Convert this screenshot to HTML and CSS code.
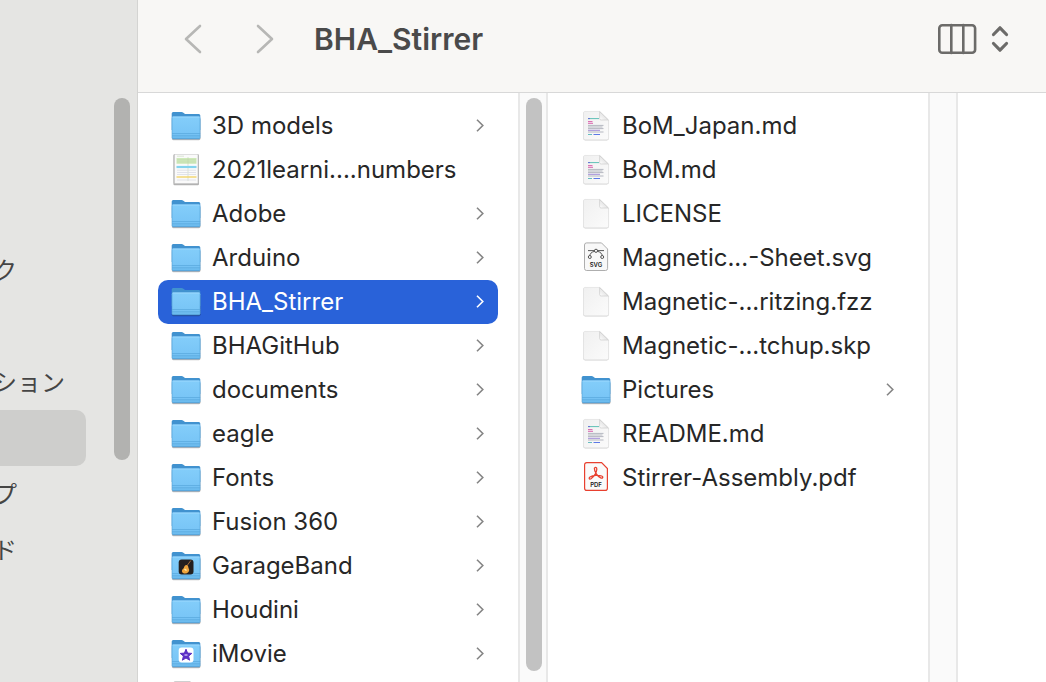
FILE: index.html
```html
<!DOCTYPE html>
<html lang="ja">
<head>
<meta charset="utf-8">
<meta name="viewport" content="width=device-width, initial-scale=1">
<title>BHA_Stirrer</title>
<link rel="stylesheet" href="styles.css">
</head>
<body>
<svg class="defs" aria-hidden="true">
  <defs>
    <linearGradient id="front" x1="0" y1="0" x2="0" y2="1"><stop offset="0" stop-color="#83cdfa"/><stop offset=".8" stop-color="#78c5f6"/><stop offset="1" stop-color="#66b7ec"/></linearGradient>
    <linearGradient id="paper" x1="0" y1="0" x2="1" y2="1"><stop offset="0" stop-color="#f0f0f0"/><stop offset="1" stop-color="#fbfbfb"/></linearGradient>
    <linearGradient id="fold" x1="0" y1="1" x2="1" y2="0"><stop offset="0" stop-color="#fff"/><stop offset=".5" stop-color="#e6e6e6"/><stop offset="1" stop-color="#f6f6f6"/></linearGradient>
  </defs>
  <symbol id="folder" viewBox="0 0 32 32">
    <rect x="1.6" y="8" width="29" height="22.4" rx="1.8" fill="#000" opacity=".12"/>
    <rect x="2" y="8" width="28.4" height="21.8" rx="1.5" fill="#000" opacity=".25"/>
    <path d="M1.7 3.5Q1.7 2 3.2 2H11.5Q12.6 2 13.4 2.8L14.3 3.5Q15 4 16 4H28.8Q30.3 4 30.3 5.5V20H1.7Z" fill="#4192cf"/>
    <path d="M1.9 8.2Q1.9 6.6 3.4 6.6H28.6Q30.2 6.6 30.2 8.2V27.5Q30.2 29 28.7 29H3.4Q1.9 29 1.9 27.5Z" fill="url(#front)"/>
    <path d="M2.5 7H29.7" stroke="#a2dcff" stroke-width=".8"/>
    <path d="M2.2 7.5V28M29.9 7.5V28" stroke="#5aaade" stroke-width=".6"/>
    <path d="M2 23.6H30.2M2 25.8H30.2" stroke="#58a7dc" stroke-width=".8"/>
    <path d="M2.4 28.8H29.8" stroke="#4d94c8" stroke-width=".7"/>
  </symbol>
  <symbol id="file" viewBox="0 0 32 32">
    <path d="M3.2 3.2Q3.2 1.6 5 1.6H20L28.9 10.4V28.6Q28.9 30.4 27 30.4H5Q3.2 30.4 3.2 28.6Z" fill="#000" opacity=".18"/>
    <path d="M3.5 3Q3.5 1.4 5.1 1.4H19.8L28.6 10V28Q28.6 29.7 26.9 29.7H5.1Q3.5 29.7 3.5 28Z" fill="url(#paper)" stroke="#e0e0e0" stroke-width=".5"/>
    <path d="M19.6 1.6V8.5Q19.6 10 21.1 10H28.4Z" fill="url(#fold)" stroke="#c6c6c6" stroke-width=".6"/>
  </symbol>
  <symbol id="markdown" viewBox="0 0 32 32">
    <use href="#file" width="32" height="32"/>
    <g fill="none" stroke-width="1">
      <path d="M8 8.6H19" stroke="#61c1b7"/><path d="M8 8.6H10" stroke="#6573d6"/>
      <path d="M8 11.6H12.5M8 13.3H13" stroke="#d964ae"/>
      <path d="M8 15.4H23.5M8 17H22.5M8 18.6H23.5M8 22H23.5" stroke="#b5b8c1"/>
      <path d="M8 20.3H20" stroke="#a08bd8"/>
      <path d="M8 24.5H12" stroke="#66bcc0"/><path d="M13.5 24.5H20" stroke="#5d79e6"/>
    </g>
  </symbol>
  <symbol id="sheet" viewBox="0 0 32 32">
    <rect x="3.4" y=".6" width="25.6" height="30.6" rx="1.2" fill="#000" opacity=".3"/>
    <rect x="4.2" y="0" width="24" height="29.8" rx=".8" fill="#fafafa" stroke="#b4b4b4" stroke-width=".8"/>
    <path d="M6.5 4H26.5V9.8H6.5Z" fill="#cfeab9"/>
    <path d="M7 2.2H14M7 5.8H26M7 8H26M18 3V27" stroke="#b8cfa8" stroke-width=".5"/>
    <path d="M6.5 13H26.5" stroke="#83d3ed" stroke-width="2.2"/>
    <path d="M7 16.2H26M7 18.5H26M7 20.5H26M7 26H26" stroke="#dadde4" stroke-width=".8"/>
    <path d="M6.5 23H26.5" stroke="#f3d569" stroke-width="1.4"/>
  </symbol>
  <symbol id="garage" viewBox="0 0 32 32">
    <use href="#folder" width="32" height="32"/>
    <rect x="8.7" y="9.5" width="14.8" height="15" rx="3" fill="#242020"/>
    <path d="M20.8 10.5L16.8 16" stroke="#a56d3b" stroke-width="1"/>
    <path d="M16.5 15Q18.5 15.5 18.5 18Q20 20 18.5 22Q16 24.5 13 23Q11 21.5 12.6 19.3Q14 18.5 14.2 16.8Q15 14.8 16.5 15Z" fill="#f0a53c"/>
    <path d="M14.5 19L16.5 20.5" stroke="#fff0b0" stroke-width="1.4"/>
  </symbol>
  <symbol id="imovie" viewBox="0 0 32 32">
    <use href="#folder" width="32" height="32"/>
    <rect x="8.7" y="9.5" width="14.8" height="15" rx="3" fill="#fff"/>
    <path d="M16 11.2L17.6 15.1L21.8 15.4L18.6 18.1L19.6 22.2L16 20L12.4 22.2L13.4 18.1L10.2 15.4L14.4 15.1Z" fill="#5b2fc4" stroke="#5b2fc4" stroke-width="1" stroke-linejoin="round"/>
    <path d="M14.5 17H17.5" stroke="#cdb9f6" stroke-width="1.4"/>
  </symbol>
  <symbol id="chevron" viewBox="0 0 8 14"><path d="M1 .7L6.8 6.5L1 12.3" fill="none" stroke="currentColor" stroke-width="1.6"/></symbol>
</svg>

<div class="window">
  <nav class="sidebar" aria-label="Sidebar">
    <div class="places">
      <a class="place" href="#">ク</a>
      <span class="place"></span>
      <a class="place" href="#">ション</a>
      <a class="place current" href="#" aria-label="Current folder"></a>
      <a class="place" href="#">プ</a>
      <a class="place" href="#">ド</a>
    </div>
    <div class="thumb side-thumb"></div>
  </nav>

  <main class="main">
    <header class="toolbar">
      <button class="tool" aria-label="Back"><svg width="20" height="32" viewBox="0 0 20 32"><path d="M17 3L3 16L17 29" class="nav-line"/></svg></button>
      <button class="tool forward" aria-label="Forward"><svg width="20" height="32" viewBox="0 0 20 32"><path d="M3 3L17 16L3 29" class="nav-line"/></svg></button>
      <h1 class="title">BHA_Stirrer</h1>
      <button class="tool view" aria-label="View as columns">
        <svg width="40" height="32" viewBox="0 0 40 32"><g class="view-line"><rect x="2.3" y="2.3" width="35.8" height="27.4" rx="3"/><path d="M14.3 2V30M26.3 2V30"/></g></svg>
        <svg width="20" height="32" viewBox="0 0 20 32"><path class="sort-line" d="M3.5 11.5L10 4.8L16.5 11.5M3.5 20.5L10 27.2L16.5 20.5"/></svg>
      </button>
    </header>

    <div class="columns">
      <ul class="list">
        <li><button class="row"><svg class="icon"><use href="#folder"/></svg><span class="name">3D models</span><svg class="chev"><use href="#chevron"/></svg></button></li>
        <li><button class="row"><svg class="icon"><use href="#sheet"/></svg><span class="name">2021learni....numbers</span></button></li>
        <li><button class="row"><svg class="icon"><use href="#folder"/></svg><span class="name">Adobe</span><svg class="chev"><use href="#chevron"/></svg></button></li>
        <li><button class="row"><svg class="icon"><use href="#folder"/></svg><span class="name">Arduino</span><svg class="chev"><use href="#chevron"/></svg></button></li>
        <li><button class="row selected"><svg class="icon"><use href="#folder"/></svg><span class="name">BHA_Stirrer</span><svg class="chev"><use href="#chevron"/></svg></button></li>
        <li><button class="row"><svg class="icon"><use href="#folder"/></svg><span class="name">BHAGitHub</span><svg class="chev"><use href="#chevron"/></svg></button></li>
        <li><button class="row"><svg class="icon"><use href="#folder"/></svg><span class="name">documents</span><svg class="chev"><use href="#chevron"/></svg></button></li>
        <li><button class="row"><svg class="icon"><use href="#folder"/></svg><span class="name">eagle</span><svg class="chev"><use href="#chevron"/></svg></button></li>
        <li><button class="row"><svg class="icon"><use href="#folder"/></svg><span class="name">Fonts</span><svg class="chev"><use href="#chevron"/></svg></button></li>
        <li><button class="row"><svg class="icon"><use href="#folder"/></svg><span class="name">Fusion 360</span><svg class="chev"><use href="#chevron"/></svg></button></li>
        <li><button class="row"><svg class="icon"><use href="#garage"/></svg><span class="name">GarageBand</span><svg class="chev"><use href="#chevron"/></svg></button></li>
        <li><button class="row"><svg class="icon"><use href="#folder"/></svg><span class="name">Houdini</span><svg class="chev"><use href="#chevron"/></svg></button></li>
        <li><button class="row"><svg class="icon"><use href="#imovie"/></svg><span class="name">iMovie</span><svg class="chev"><use href="#chevron"/></svg></button></li>
        <li><span class="row"><svg class="icon" viewBox="0 0 32 32"><path d="M3.5 29V1Q3.5 -1 5.5 -1H20L28 7V29Z" fill="#cfcfcf"/></svg></span></li>
      </ul>
      <div class="gutter"><div class="thumb"></div></div>
      <ul class="list">
        <li><button class="row"><svg class="icon"><use href="#markdown"/></svg><span class="name">BoM_Japan.md</span></button></li>
        <li><button class="row"><svg class="icon"><use href="#markdown"/></svg><span class="name">BoM.md</span></button></li>
        <li><button class="row"><svg class="icon"><use href="#file"/></svg><span class="name">LICENSE</span></button></li>
        <li><button class="row">
          <svg class="icon" viewBox="0 0 32 32">
            <path d="M4.5 3Q4.5 .9 6.6 .9H21.5L27.6 7V26.4Q27.6 28.5 25.5 28.5H6.6Q4.5 28.5 4.5 26.4Z" fill="#f8f8f8" stroke="#a5a5a5" stroke-width=".9"/>
            <path d="M8 8.6H24M14.5 9.3Q9.7 10.5 9.7 14.5M17.5 9.3Q22.3 10.5 22.3 14.5" fill="none" stroke="#444" stroke-width=".9"/>
            <g fill="#f8f8f8" stroke="#444" stroke-width=".9"><circle cx="16" cy="8.8" r="1.6"/><circle cx="9.8" cy="15" r="1.5"/><circle cx="22.2" cy="15" r="1.5"/></g>
            <text x="16" y="24.5" class="badge">SVG</text>
          </svg><span class="name">Magnetic...-Sheet.svg</span></button></li>
        <li><button class="row"><svg class="icon"><use href="#file"/></svg><span class="name">Magnetic-...ritzing.fzz</span></button></li>
        <li><button class="row"><svg class="icon"><use href="#file"/></svg><span class="name">Magnetic-...tchup.skp</span></button></li>
        <li><button class="row"><svg class="icon"><use href="#folder"/></svg><span class="name">Pictures</span><svg class="chev"><use href="#chevron"/></svg></button></li>
        <li><button class="row"><svg class="icon"><use href="#markdown"/></svg><span class="name">README.md</span></button></li>
        <li><button class="row">
          <svg class="icon" viewBox="0 0 32 32">
            <path d="M4.6 3Q4.6 .7 6.8 .7H21.6L27.4 6.5V26.2Q27.4 28.4 25.2 28.4H6.8Q4.6 28.4 4.6 26.2Z" fill="#fafafa" stroke="#e8402f" stroke-width="1.2"/>
            <path d="M14.4 6.5C14.4 5 17 5 16.8 7.2C16.5 10.5 13.5 14.8 11 16.7C9.3 17.8 8.4 16 10 15C13 13.3 18.5 12.8 21.7 14C23.8 15 22.5 16.8 20.7 15.9C17.5 14.5 14.3 9.5 14.4 6.5Z" fill="none" stroke="#e8402f" stroke-width="1.3"/>
            <text x="16" y="25" class="badge">PDF</text>
          </svg><span class="name">Stirrer-Assembly.pdf</span></button></li>
      </ul>
      <div class="gutter"></div>
      <div class="preview"></div>
    </div>
  </main>
</div>
</body>
</html>
```
FILE: styles.css
```css
* {
  box-sizing: border-box;
}

body {
  margin: 0;
  background: #fff;
  color: #272727;
  font-family: Inter, "Noto Sans CJK JP", sans-serif;
}

button {
  border: 0;
  padding: 0;
  background: none;
  color: inherit;
  font: inherit;
  text-align: left;
}

.defs {
  display: block;
  width: 0;
  height: 0;
}

.window {
  display: flex;
  height: 100vh;
  overflow: hidden;
}

/* Sidebar */
.sidebar {
  display: flex;
  flex: 0 0 138px;
  justify-content: space-between;
  padding-right: 7px;
  border-right: 1px solid #d4d4d2;
  background: #e5e5e3;
}

.places {
  width: 86px;
  padding-top: 242px;
}

.place {
  display: block;
  height: 56px;
  border-radius: 0 10px 10px 0;
  color: #454545;
  font-size: 24px;
  line-height: 58px;
  text-decoration: none;
  text-indent: -7px;
  white-space: nowrap;
}

.place.current {
  background: #cececc;
}

.thumb {
  width: 16px;
  border-radius: 8px;
  background: #c2c2c2;
}

.side-thumb {
  height: 362px;
  margin-top: 98px;
  background: #b2b2b0;
}

/* Toolbar */
.main {
  display: flex;
  flex: 1;
  flex-direction: column;
  min-width: 0;
}

.toolbar {
  display: flex;
  flex: none;
  align-items: center;
  height: 93px;
  padding: 0 36px 14px 45px;
  border-bottom: 1px solid #d8d8d8;
  background: #f8f7f5;
}

.tool {
  display: flex;
  gap: 13px;
}

.forward {
  margin-left: 52px;
}

.view {
  margin-left: auto;
}

.title {
  margin: 0 0 0 39px;
  color: #4a4a4a;
  font-size: 30px;
  font-weight: 600;
  line-height: 40px;
}

.nav-line,
.view-line,
.sort-line {
  fill: none;
  stroke-linecap: round;
  stroke-linejoin: round;
}

.nav-line {
  stroke: #b7b7b5;
  stroke-width: 2.6;
}

.view-line {
  stroke: #6c6b69;
  stroke-width: 2.6;
}

.sort-line {
  stroke: #6c6b69;
  stroke-width: 3.2;
}

/* File columns */
.columns {
  display: flex;
  flex: 1;
  min-height: 0;
}

.list {
  flex: 0 0 380px;
  margin: 0;
  padding: 11px 20px 0;
  overflow: hidden;
  list-style: none;
}

.row {
  display: flex;
  align-items: center;
  width: 100%;
  height: 44px;
  padding: 0 14px 0 12px;
  border-radius: 10px;
  font-size: 24px;
  line-height: 44px;
  white-space: nowrap;
}

.selected {
  background: #2962d9;
  color: #fff;
}

.icon {
  flex: none;
  width: 32px;
  height: 32px;
  overflow: visible;
}

.name {
  flex: 1;
  margin-left: 10px;
}

.chev {
  flex: none;
  width: 8px;
  height: 14px;
  color: #858585;
}

.selected .chev {
  color: #fff;
}

.gutter {
  display: flex;
  flex: 0 0 30px;
  padding: 5px 0 11px 6px;
  border: solid #e8e8e8;
  border-width: 0 2px;
  background: #fafafa;
}

.preview {
  flex: 1;
}

.badge {
  fill: #222;
  font-family: Inter, sans-serif;
  font-size: 6px;
  font-weight: 600;
  text-anchor: middle;
}
```
